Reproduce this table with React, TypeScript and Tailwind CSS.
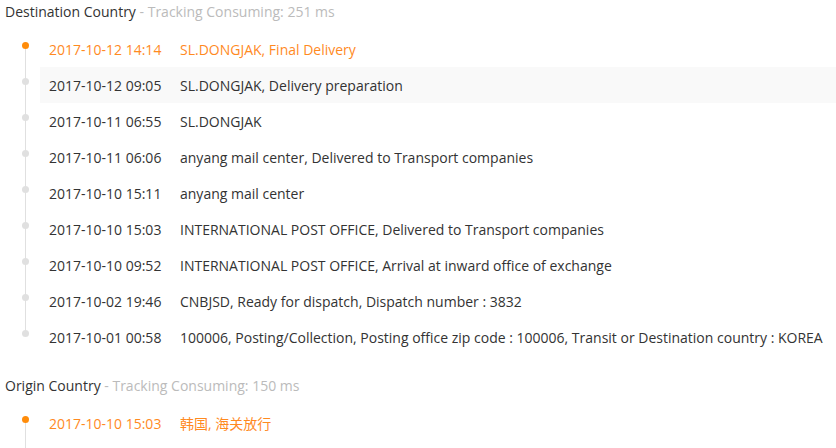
type Item = { time: string; text: string; hover?: boolean };

const destination: Item[] = [
  { time: "2017-10-12 14:14", text: "SL.DONGJAK, Final Delivery" },
  { time: "2017-10-12 09:05", text: "SL.DONGJAK, Delivery preparation", hover: true },
  { time: "2017-10-11 06:55", text: "SL.DONGJAK" },
  { time: "2017-10-11 06:06", text: "anyang mail center, Delivered to Transport companies" },
  { time: "2017-10-10 15:11", text: "anyang mail center" },
  { time: "2017-10-10 15:03", text: "INTERNATIONAL POST OFFICE, Delivered to Transport companies" },
  { time: "2017-10-10 09:52", text: "INTERNATIONAL POST OFFICE, Arrival at inward office of exchange" },
  { time: "2017-10-02 19:46", text: "CNBJSD, Ready for dispatch, Dispatch number : 3832" },
  {
    time: "2017-10-01 00:58",
    text: "100006, Posting/Collection, Posting office zip code : 100006, Transit or Destination country : KOREA",
  },
];

// more entries follow below the fold
const origin: Item[] = [{ time: "2017-10-10 15:03", text: "韩国, 海关放行" }];

function Timeline({
  title,
  ms,
  items,
  more,
  className,
}: {
  title: string;
  ms: number;
  items: Item[];
  more?: boolean;
  className?: string;
}) {
  return (
    <section className={className}>
      <h3 className="h-6 leading-6 pl-[5px] text-[14px] text-[#333]">
        {title} <span className="text-[#bbb]">- Tracking Consuming: {ms} ms</span>
      </h3>
      <ul className="pt-[7px]">
        {items.map((it, i) => {
          const first = i === 0;
          const lastOne = i === items.length - 1;
          const last = lastOne && !more;
          return (
            <li
              key={i}
              className={`relative flex h-9 items-center ml-10 pl-[9px] whitespace-nowrap ${
                it.hover ? "bg-[#f9f9f9]" : ""
              } ${first ? "text-[#ff8a1f]" : "text-[#333]"}`}
            >
              <span
                className={`absolute left-[-15px] w-px bg-[#e0e0e0] ${
                  first ? "top-[14px]" : "top-0"
                } ${last ? "h-[14px]" : lastOne ? "bottom-[-36px]" : "bottom-0"}`}
              />
              <span
                className={`absolute left-[-18.5px] top-[10.5px] w-[7px] h-[7px] rounded-full ${
                  first ? "bg-[#ff8c0a]" : "bg-[#e0e0e0]"
                }`}
              />
              <span className="w-[131px] shrink-0">{it.time}</span>
              <span>{it.text}</span>
            </li>
          );
        })}
      </ul>
    </section>
  );
}

export default function App() {
  return (
    <div
      className="w-[836px] h-[448px] overflow-hidden bg-white text-[14px]"
      style={{ fontFamily: '"Open Sans", "Noto Sans CJK SC", sans-serif' }}
    >
      <Timeline title="Destination Country" ms={251} items={destination} />
      <Timeline title="Origin Country" ms={150} items={origin} more className="mt-[19px]" />
    </div>
  );
}
